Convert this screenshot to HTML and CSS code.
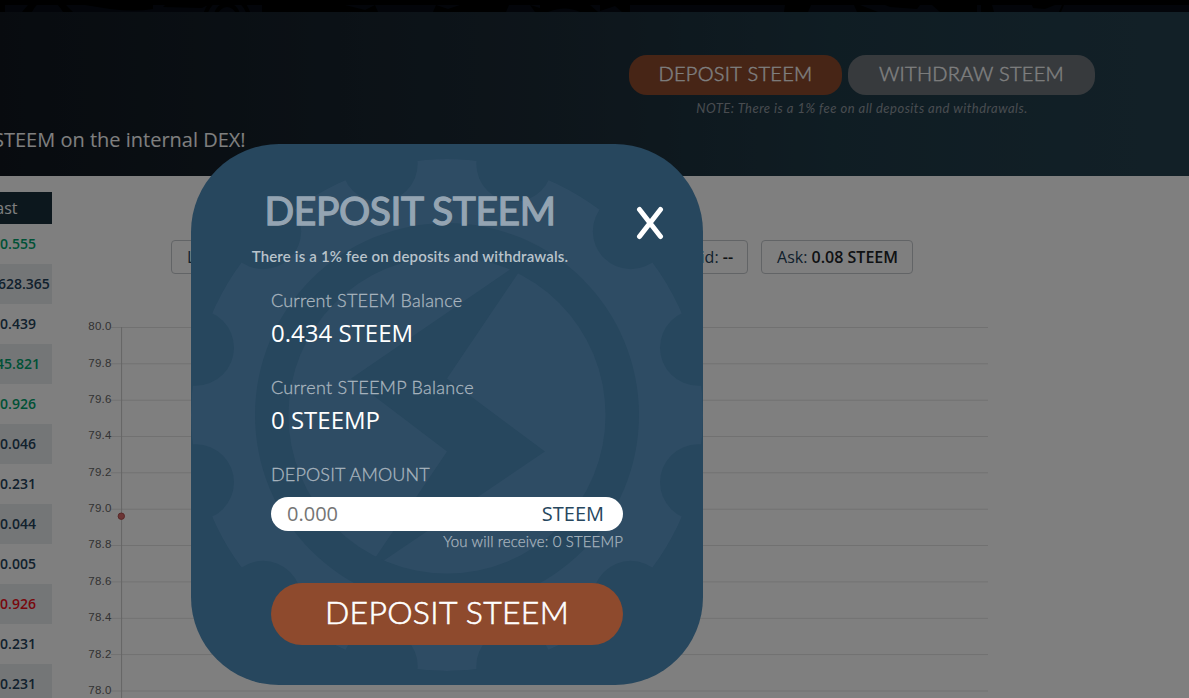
FILE: index.html
```html
<!DOCTYPE html>
<html lang="en">
<head>
    <meta charset="UTF-8">
    <meta name="viewport" content="width=device-width, initial-scale=1.0">
    <title>Deposit STEEM</title>
    <link rel="stylesheet" href="styles.css">
</head>
<body>

    <!-- bottom edge of the nav, with the gear artwork -->
    <div class="nav-edge">
        <svg width="1189" height="7" viewBox="0 5 1189 7">
            <path d="M0 5H5V12H0ZM28 5H66L73 12H63Q56 0 48 0Q38 0 32 12H22ZM85 5H153V9Q135 12 110 9ZM165 5H208L202 8L163 7ZM262 5H345L365 10L375 5L378 12H262ZM436 5L448 9L460 5H509L506 12H433ZM530 5L540 8V5H590L598 12H580Q565 5 548 12H535ZM600 5H630V12H622L615 6L600 11ZM785 5H811L808 12H784ZM860 5L878 12H857L854 5ZM885 5H920L917 9L890 7ZM932 5H977V12H940ZM981 5H992L994 12H981ZM1032 5H1055L1045 9L1033 8ZM1062 5H1064L1061 12H1059Z"/>
            <circle cx="227" cy="19" r="22"/>
            <circle cx="227" cy="16" r="11"/>
        </svg>
    </div>

    <div class="hero">
        <p class="hero-text">STEEM on the internal DEX!</p>
        <div class="hero-actions">
            <div class="hero-buttons">
                <button class="btn btn-deposit">DEPOSIT STEEM</button>
                <button class="btn btn-withdraw">WITHDRAW STEEM</button>
            </div>
            <p class="hero-note">NOTE: There is a 1% fee on all deposits and withdrawals.</p>
        </div>
    </div>

    <div class="main">
        <div class="market-list">
            <div class="market-head">Last</div>
            <div class="market-row up">0.555</div>
            <div class="market-row">1,628.365</div>
            <div class="market-row">0.439</div>
            <div class="market-row up">45.821</div>
            <div class="market-row up">0.926</div>
            <div class="market-row">0.046</div>
            <div class="market-row">0.231</div>
            <div class="market-row">0.044</div>
            <div class="market-row">0.005</div>
            <div class="market-row down">0.926</div>
            <div class="market-row">0.231</div>
            <div class="market-row">0.231</div>
        </div>

        <div class="market">
            <div class="pills">
                <div class="pill">Last:</div>
                <div class="pill pill-bid">Bid: <b>--</b></div>
                <div class="pill">Ask: <b>0.08 STEEM</b></div>
            </div>
            <svg class="chart" width="920" height="390" viewBox="80 308 920 390">
                <g class="grid">
                    <path d="M111 327.5H988M111 363.8H988M111 400.2H988M111 436.5H988M111 472.8H988M111 509.2H988M111 545.5H988M111 581.9H988M111 618.3H988M111 654.6H988M111 691H988"/>
                    <path class="axis" d="M121.6 327V698"/>
                </g>
                <g class="ticks">
                    <text x="111.500" y="330.300">80.0</text>
                    <text x="111.500" y="367.300">79.8</text>
                    <text x="111.500" y="403.300">79.6</text>
                    <text x="111.500" y="439.300">79.4</text>
                    <text x="111.500" y="476.300">79.2</text>
                    <text x="111.500" y="512.300">79.0</text>
                    <text x="111.500" y="548.300">78.8</text>
                    <text x="111.500" y="585.300">78.6</text>
                    <text x="111.500" y="621.300">78.4</text>
                    <text x="111.500" y="658.300">78.2</text>
                    <text x="111.500" y="694.300">78.0</text>
                </g>
                <circle class="point" cx="121.300" cy="516.200" r="3.200"/>
            </svg>
        </div>
    </div>

    <div class="overlay"></div>

    <div class="modal">
        <svg class="modal-gear" width="512" height="512" viewBox="-256 -256 512 512">
            <defs>
                <mask id="gear">
                    <circle r="256" fill="#fff"/>
                    <g id="notches" fill="#000">
                        <circle cx="251" cy="-67.300" r="38"/>
                        <circle cx="183.800" cy="-183.800" r="38"/>
                        <circle cx="67.300" cy="-251" r="38"/>
                    </g>
                    <use href="#notches" transform="rotate(90)"/>
                    <use href="#notches" transform="rotate(180)"/>
                    <use href="#notches" transform="rotate(270)"/>
                    <circle r="192" fill="#000"/>
                    <circle r="158.500" fill="#fff"/>
                    <path d="M63 -145.500L-96 -36.500L0 36.500L-72 143L-63 145.500L98 36.500L0 -36.500L72 -143Z" fill="#000"/>
                </mask>
            </defs>
            <circle class="gear-fill" r="256" mask="url(#gear)"/>
        </svg>

        <div class="modal-head">
            <div class="modal-heading">
                <h1>DEPOSIT STEEM</h1>
                <p class="modal-note">There is a 1% fee on deposits and withdrawals.</p>
            </div>
            <button class="close" aria-label="Close">
                <svg width="28" height="34" viewBox="0 0 28 34">
                    <path d="M3.500 3.500L24.500 30.500M24.500 3.500L3.500 30.500"/>
                </svg>
            </button>
        </div>

        <div class="modal-body">
            <div class="balance">
                <div class="label label-steem">Current STEEM Balance</div>
                <div class="value">0.434 STEEM</div>
            </div>
            <div class="balance">
                <div class="label label-steemp">Current STEEMP Balance</div>
                <div class="value">0 STEEMP</div>
            </div>
            <label class="label label-amount" for="amount">DEPOSIT AMOUNT</label>
            <div class="amount">
                <input id="amount" type="text" placeholder="0.000">
                <span>STEEM</span>
            </div>
            <p class="receive">You will receive: 0 STEEMP</p>
            <button class="submit">DEPOSIT STEEM</button>
        </div>
    </div>

</body>
</html>
```

FILE: styles.css
```css
* {
    box-sizing: border-box;
}
body {
    margin: 0;
    height: 698px;
    overflow: hidden;
    background-color: #fff;
    font-family: "Open Sans", "Noto Sans", sans-serif;
    color: #24425a;
}
h1, p {
    margin: 0;
}
button {
    border: none;
    padding: 0;
    cursor: pointer;
    white-space: nowrap;
}

/* page header */
.nav-edge {
    height: 12px;
    padding-top: 5px;
    background: linear-gradient(#000 5px, #060b14 5px);
}
.nav-edge svg {
    display: block;
}
.nav-edge circle {
    fill: none;
    stroke: #000;
    stroke-width: 4;
}
.hero {
    height: 164px;
    display: flex;
    justify-content: space-between;
    padding-right: 94px;
    background: linear-gradient(to right, #10171f, #1b2a35 45%, #1f3a47 70%, #25414f);
    color: #fff;
}
.hero-text {
    margin: 113px 0 0 -7px;
    font-size: 20px;
    line-height: 30px;
    white-space: nowrap;
}
.hero-actions {
    padding-top: 43px;
    text-align: center;
    font-family: Lato, sans-serif;
    font-weight: 300;
}
.hero-buttons {
    display: flex;
    gap: 6px;
}
.btn {
    height: 40px;
    padding-bottom: 4px;
    border-radius: 18px;
    color: #fff;
    font: inherit;
    font-size: 20px;
    letter-spacing: 0.300px;
    -webkit-text-stroke: 0.400px #fff;
}
.btn-deposit {
    width: 213px;
    background-color: #8e4a2d;
}
.btn-withdraw {
    width: 247px;
    background-color: #6e757b;
}
.hero-note {
    margin-top: 3px;
    font-size: 13px;
    font-weight: 400;
    letter-spacing: 0.480px;
    line-height: 20px;
    font-style: italic;
    color: #9299a0;
}

/* market list */
.main {
    display: flex;
}
.market-list {
    width: 67px;
    margin: 16px 0 0 -15px;
    font-size: 14px;
    font-weight: 600;
}
.market-head {
    height: 32px;
    padding-left: 2px;
    background-color: #192f3b;
    color: #fff;
    font-size: 16px;
    font-weight: 400;
    line-height: 32px;
}
.market-row {
    display: flex;
    justify-content: center;
    height: 40px;
    padding-right: 1px;
    line-height: 40px;
}
.market-row:nth-child(odd) {
    background-color: #e9ecef;
}
.up {
    color: #00a36c;
}
.down {
    color: #f0101a;
}

/* chart */
.market {
    padding: 64px 0 0 28px;
}
.pills {
    display: flex;
    gap: 13px;
    width: 833px;
    padding-left: 91px;
}
.pill {
    height: 34px;
    padding: 0 14px 0 15px;
    border: 1px solid #c4c8cc;
    border-radius: 4px;
    font-size: 16px;
    line-height: 32px;
    white-space: nowrap;
}
.pill b {
    font-weight: 600;
    color: #212529;
}
.pill-bid {
    margin-left: auto;
}
.chart {
    display: block;
    margin-top: 34px;
}
.grid {
    stroke: #e3e3e3;
    stroke-width: 1;
}
.axis {
    stroke: #cbcbcb;
}
.ticks {
    font-family: "Liberation Sans", Arial, sans-serif;
    font-size: 11.500px;
    letter-spacing: 0.200px;
    text-anchor: end;
    fill: #666;
}
.point {
    fill: #d96b6b;
    stroke: #b05050;
}

.overlay {
    position: absolute;
    inset: 0;
    background-color: rgba(0, 0, 0, 0.5);
}

/* deposit dialog */
.modal {
    position: absolute;
    left: 191px;
    top: 144px;
    width: 512px;
    height: 541px;
    border-radius: 88px;
    overflow: hidden;
    background-color: #27475e;
    color: #a9b5bf;
    font-family: Lato, sans-serif;
}
.modal-gear {
    position: absolute;
    left: 0;
    top: 14.500px;
}
.gear-fill {
    fill: #2e4c64;
}
.modal-head {
    position: relative;
    display: flex;
    justify-content: space-between;
    padding: 42px 39px 0 49px;
}
.modal-heading {
    width: 340px;
    text-align: center;
    white-space: nowrap;
}
h1 {
    font-size: 39px;
    font-weight: 400;
    line-height: 48px;
    letter-spacing: -0.400px;
    color: #94a4b2;
    -webkit-text-stroke: 1.300px #94a4b2;
}
.modal-note {
    margin-top: 10px;
    font-size: 15px;
    font-weight: 600;
    letter-spacing: 0.170px;
    line-height: 24px;
    color: #b9c3cb;
}
.close {
    height: 34px;
    margin-top: 20px;
    background: none;
}
.close svg {
    display: block;
}
.close path {
    fill: none;
    stroke: #fff;
    stroke-width: 5;
    stroke-linecap: round;
}
.modal-body {
    position: relative;
    padding: 19px 80px 0;
}
.balance {
    margin-bottom: 23px;
}
.label {
    display: block;
    font-size: 18px;
    font-weight: 300;
    line-height: 27px;
    -webkit-text-stroke: 0.300px #a9b5bf;
}
.label-steem {
    letter-spacing: 0.220px;
}
.label-steemp {
    letter-spacing: 0.280px;
}
.label-amount {
    letter-spacing: 0.150px;
}
.value {
    padding-top: 1px;
    color: #fff;
    font-size: 24px;
    line-height: 36px;
    font-family: "Open Sans", "Noto Sans", sans-serif;
}
.amount {
    display: flex;
    align-items: center;
    height: 34px;
    margin-top: 9px;
    padding: 0 19px 2px 16px;
    border-radius: 17px;
    background-color: #fff;
    color: #27475e;
    font-family: "Open Sans", "Noto Sans", sans-serif;
    font-size: 20px;
}
.amount input {
    flex: 1;
    min-width: 0;
    padding: 0;
    border: none;
    outline: none;
    background: none;
    font: inherit;
}
.amount input::placeholder {
    color: #757575;
}
.receive {
    font-size: 15px;
    font-weight: 300;
    letter-spacing: 0.140px;
    line-height: 21px;
    text-align: right;
    -webkit-text-stroke: 0.250px #a9b5bf;
}
.submit {
    width: 352px;
    height: 62px;
    margin-top: 31px;
    padding-bottom: 5px;
    border-radius: 31px;
    background-color: #8e4a2d;
    color: #fff;
    font-family: Lato, sans-serif;
    font-size: 32px;
    font-weight: 300;
    letter-spacing: 0.300px;
    -webkit-text-stroke: 0.600px #fff;
}
```
